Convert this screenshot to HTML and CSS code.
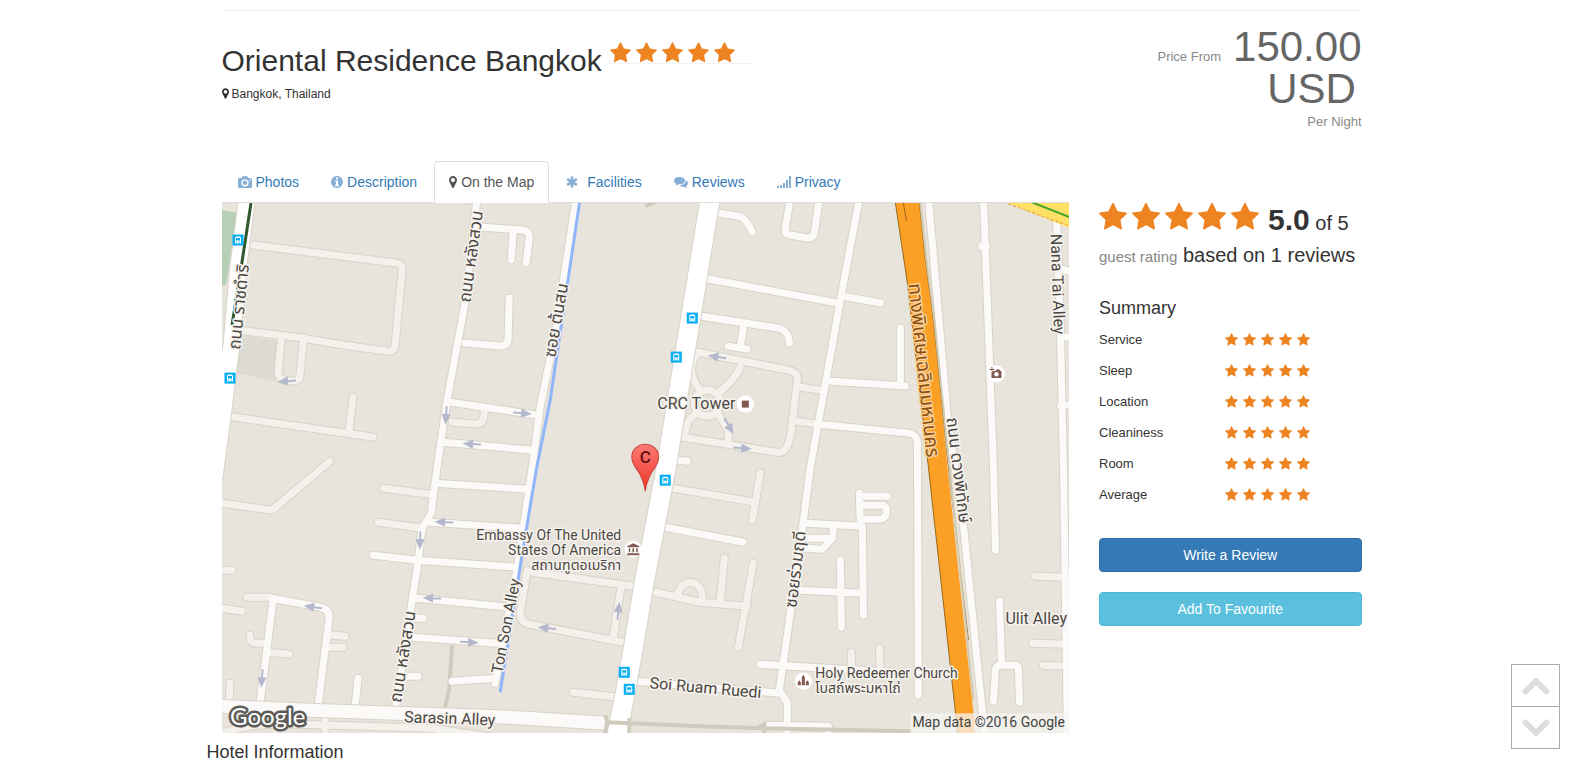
FILE: index.html
```html
<!DOCTYPE html>
<html lang="en">
<head>
<meta charset="utf-8">
<title>Oriental Residence Bangkok</title>
<link rel="stylesheet" href="styles.css">
</head>
<body>
<svg class="defs" aria-hidden="true">
  <symbol id="star" viewBox="0 60 1664 1570"><path d="M1664 647q0 22-26 48l-363 354 86 500q1 7 1 20 0 21-10.500 35.500t-30.500 14.500q-19 0-40-12l-449-236-449 236q-22 12-40 12-21 0-31.500-14.500t-10.500-35.500q0-6 2-20l86-500-364-354q-25-27-25-48 0-37 56-46l502-73 225-455q19-41 49-41t49 41l225 455 502 73q56 9 56 46z"/></symbol>
  <symbol id="pin" viewBox="0 384 1024 1536"><path d="M768 896q0-106-75-181t-181-75-181 75-75 181 75 181 181 75 181-75 75-181zm256 0q0 109-33 179l-364 774q-16 33-47.500 52t-67.500 19-67.500-19-46.500-52l-365-774q-33-70-33-179 0-212 150-362t362-150 362 150 150 362z"/></symbol>
</svg>

<main class="page">
  <header class="hotel-head">
    <div>
      <div class="title-row">
        <h1>Oriental Residence Bangkok</h1>
        <div class="stars stars-title" role="img" aria-label="5 stars">
          <svg><use href="#star"/></svg><svg><use href="#star"/></svg><svg><use href="#star"/></svg><svg><use href="#star"/></svg><svg><use href="#star"/></svg>
        </div>
      </div>
      <p class="place"><svg><use href="#pin"/></svg>Bangkok, Thailand</p>
    </div>
    <div class="price">
      <p class="amount"><small>Price From</small>150.00<br>USD<span class="trail">&nbsp;</span></p>
      <p class="per">Per Night</p>
    </div>
  </header>

  <div class="row">
    <section class="col-main">
      <nav>
        <ul class="tabs">
          <li><a href="#photos"><svg class="ic14" viewBox="0 0 14 14"><path fill-rule="evenodd" d="M1.500 3H3.600L4.900 1.200H9.100L10.400 3H12.500Q14 3 14 4.500V11.500Q14 13 12.500 13H1.500Q0 13 0 11.500V4.500Q0 3 1.500 3ZM7 4.200A3.600 3.600 0 1 0 7 11.400A3.600 3.600 0 1 0 7 4.200ZM7 5.600A2.200 2.200 0 1 1 7 10A2.200 2.200 0 1 1 7 5.600ZM11.500 4.300V5.600H12.900V4.300Z"/></svg>Photos</a></li>
          <li><a href="#description"><svg class="ic12" viewBox="0 0 12 12"><path fill-rule="evenodd" d="M6 0A6 6 0 1 0 6 12A6 6 0 1 0 6 0ZM5 1.500H7V3.300H5ZM4.200 4.500H7V8.700H8V10.200H4V8.700H5V6H4.200Z"/></svg>Description</a></li>
          <li><a class="active" href="#map"><svg class="ic8"><use href="#pin"/></svg>On the Map</a></li>
          <li><a href="#facilities"><svg class="ic-wide" viewBox="0 0 12 12"><path class="line" d="M6 .5V11.500M1.200 3.200L10.800 8.800M10.800 3.200L1.200 8.800"/></svg>Facilities</a></li>
          <li><a href="#reviews"><svg class="ic14" viewBox="0 0 14 14"><path d="M5.500 2C2.500 2 0 3.600 0 5.700C0 7 .9 8 2.100 8.700C2 9.500 1.600 10 1.200 10.500C2.500 10.400 3.500 9.900 4.200 9.300C8 9.700 11 8 11 5.700C11 3.600 8.500 2 5.500 2Z"/><path d="M11.900 5C12 8 9 10.200 5.600 10.200C6.600 11.300 8.500 11.900 10.200 11.700C11 12.400 12 12.800 13.200 12.800C12.700 12.300 12.400 11.800 12.300 11.100C14.600 9.800 14.500 6.500 11.900 5Z"/></svg>Reviews</a></li>
          <li><a href="#privacy"><svg class="ic14" viewBox="0 0 14 14"><path d="M0 11H2V13H0ZM3 10H5V13H3ZM6 8H8V13H6ZM9 5H11V13H9ZM12 1H14V13H12Z"/></svg>Privacy</a></li>
        </ul>
      </nav>
      <svg class="map" viewBox="222 203 847 530" role="img" aria-label="Map around the hotel">
        <defs>
          <g id="lanes">
            <path d="M253 245L396 263Q403 264 402 270L395 345Q394 352 387 351Q340 345 303 338L245 331"/>
            <path d="M281 341L278 372Q279 380 287 381H293Q300 381 300 374L303 343"/>
            <path d="M227 416L373 437M353 397L349 430M330 461L272 510 222 503"/>
            <path d="M452 422L476 424Q484 424 484 412M470 200L460 197M383 488L430 494M378 522L422 528"/>
            <path d="M222 570H232M222 608L242 611M247 597H270M250 635Q249 643 257 643H265M268 652L289 654M332 635L345 636M330 647H343M230 683L229 705"/>
            <path d="M697 352L788 370Q798 372 797 380L791 430Q788 455 776 452L682 437M700 390Q684 370 697 353M718 393Q735 380 740 367M697 413Q684 420 685 437M717 413L728 430V443"/>
            <circle cx="707" cy="403" r="13"/>
            <path d="M800 387L820 390M795 421L817 424"/>
            <path d="M672 488L755 502M760 473L752 520M655 592L700 602 747 606M677 597C679 576 704 578 702 600M724 558L720 600M753 563L738 647"/>
            <path d="M533 572L633 586M527 570L520 612Q520 622 529 624L623 642M621 585L613 637M573 692L617 697M851 652V670M879 648L880 672"/>
            <path d="M222 733Q250 722 300 724L430 728 500 738M325 706V730M1032 643L1066 644M1043 665L1066 666M1035 576L1067 577"/>
          </g>
          <g id="streets">
            <path d="M477 198L465 302 447 400 437 467 431 513 422 528 417 568 395 710"/>
            <path d="M480 227L522 230Q530 231 529 238L526 263M513 232L511 260M465 343L500 346Q508 346 508 338L509 298"/>
            <path d="M450 402L537 415M443 442L533 450M435 483L527 489M430 522L522 528M373 555L417 560 517 567M417 598L510 607M413 618H423M413 637L497 643M403 676H418M452 681L495 678"/>
            <path d="M576 198L555 333 540 407 532 467 517 568 495 683"/>
            <path d="M272 598L320 607Q330 609 329 618L318 706M273 600L260 703M358 678L355 706"/>
            <path d="M717 213L738 216Q745 217 752 232M703 278L837 303M847 297L880 303M700 316L778 328Q789 331 789 343M743 328L740 347M728 346L747 349"/>
            <path d="M790 198L785 228Q784 234 790 235L806 238Q812 239 814 233L819 198M677 460L687 461M665 527L743 542"/>
            <path d="M859 198L840 300 810 467 802 528 783 662 779 690 787 702V730"/>
            <path d="M828 381L905 386M900 328L900 384M817 424L908 433Q916 434 917 442L918 695"/>
            <path d="M807 523L862 526 863 615M859 493L860 525M860 496H887M862 505H882Q887 506 886 513Q885 519 879 519H862M833 528L832 538H807M832 538L822 549 805 548M840 560L841 627M800 590L862 593"/>
            <path d="M760 664L893 672M635 681L780 693M768 725L828 726V738"/>
            <path d="M983 198L993 467 995 550M981 246H986M928 198L947 417 962 515 982 712 985 740"/>
            <path d="M1056 216L1060 333 1063 467 1067 740M1058 268L1072 272M1060 337H1072M1060 405H1072"/>
            <path d="M999 601L1001 662M993 701L995 669Q996 665 1000 665H1014Q1019 665 1018 670L1019 702"/>
          </g>
          <g id="bus">
            <rect x="-5.500" y="-5.500" width="11" height="11" fill="#05aef5"/>
            <path d="M-3 3.500V-2Q-3 -3.500 -1.500 -3.500H1.500Q3 -3.500 3 -2V3.500Z" fill="#fff"/>
            <path d="M-2 -2H2V.5H-2ZM-2 1.500H-1V2.500H-2ZM1 1.500H2V2.500H1ZM-1.500 3H1.500V3.500H-1.500Z" fill="#05aef5"/>
          </g>
          <path id="way" d="M-8 0H2M1 -3L8 0 1 3Z"/>
          <linearGradient id="pinfill" x1="0" y1="0" x2="0" y2="1"><stop offset="0" stop-color="#fb7b74"/><stop offset="1" stop-color="#ee3328"/></linearGradient>
        </defs>

        <rect class="land" x="222" y="203" width="848" height="530"/>
        <path class="park" d="M222 210L237 213 226 285H222Z"/>
        <path class="block" d="M240 335L280 341 275 381 237 373Z"/>
        <path class="track" d="M452 645L449 690 445 707M645 206L658 201"/>

        <use class="case" href="#lanes"/><use class="case" href="#streets"/>
        <use class="lane" href="#lanes"/><use class="street" href="#streets"/>

        <path class="case avenue-l" d="M247 198L238 270 232 340 223 413 214 480"/>
        <path class="road avenue-l" d="M247 198L238 270 232 340 223 413 214 480"/>
        <path class="rail" d="M251 203L240 275 232 325"/>
        <path class="canal" d="M580 198L550 400 536 470 521 560 500 692"/>
        <path class="case sarasin" d="M218 706L310 710 510 717 605 723"/>
        <path class="street sarasin" d="M218 706L310 710 510 717 605 723"/>
        <path class="case avenue" d="M710 198L666 467 644 582 633 648 624 698 616 738"/>
        <path class="road avenue" d="M710 198L666 467 644 582 633 648 624 698 616 738"/>
        <path class="track" d="M605 715L607 722 605 733M607 722L700 726 763 728 912 731M629 718V735M756 728L764 724V733"/>

        <path class="highway" d="M895 203L907 283 928 467 955 712 957 733H974L973 712 947 467 933 320 925 260 919 203Z"/>
        <path class="edge" d="M895 203L907 283 928 467 955 712 957 733M903 203L906 221M919 203L925 260 933 320 948 467 968 640"/>
        <path class="ramp" d="M920 203L926 260 934 320 949 467 973 700"/>
        <path class="yellow" d="M1007 203L1069 228V203Z"/>
        <path class="dash" d="M1008 204L1069 226"/>
        <path class="green" d="M1028 201L1069 217"/>

        <g class="ways">
          <use href="#way" transform="translate(288 381) rotate(176)"/><use href="#way" transform="translate(446 414) rotate(94)"/>
          <use href="#way" transform="translate(473 444) rotate(183)"/><use href="#way" transform="translate(521 413) rotate(5)"/>
          <use href="#way" transform="translate(718 357) rotate(188)"/><use href="#way" transform="translate(728 425) rotate(60)"/>
          <use href="#way" transform="translate(741 448) rotate(4)"/><use href="#way" transform="translate(445 522) rotate(182)"/>
          <use href="#way" transform="translate(420 539) rotate(92)"/><use href="#way" transform="translate(433 598) rotate(182)"/>
          <use href="#way" transform="translate(468 642) rotate(3)"/><use href="#way" transform="translate(314 607) rotate(188)"/>
          <use href="#way" transform="translate(262 677) rotate(94)"/><use href="#way" transform="translate(548 628) rotate(186)"/>
          <use href="#way" transform="translate(618 612) rotate(-84)"/>
        </g>
        <use href="#bus" transform="translate(238 240)"/><use href="#bus" transform="translate(230 378)"/>
        <use href="#bus" transform="translate(692 318)"/><use href="#bus" transform="translate(676 357)"/>
        <use href="#bus" transform="translate(665 480)"/><use href="#bus" transform="translate(624 672)"/>
        <use href="#bus" transform="translate(629 689)"/>

        <g class="poi">
          <circle cx="745" cy="404" r="8.500"/><path d="M741.500 400.500H748.500V407.500H741.500Z"/>
          <circle cx="633" cy="549" r="8.500"/><path d="M633 543L639 546V547H627V546ZM628.500 548H630V552H628.500ZM632.200 548H633.800V552H632.200ZM636 548H637.500V552H636ZM627 553H639V555H627Z"/>
          <circle cx="996" cy="374" r="8.500"/><path fill-rule="evenodd" d="M991 371H995L996 369.500H999L1000 371H1001V378H991ZM996 372A2 2 0 1 0 996 376.500A2 2 0 1 0 996 372ZM989 369H991V367H992V369H994V370H992V372H991V370H989Z"/>
          <circle cx="803" cy="681" r="8.500"/><path d="M797.500 682L799 680 800.500 682V685H797.500ZM801.500 677L803 674.500 804.500 677V685H801.500ZM805.500 682L807 680 808.500 682V685H805.500Z"/>
        </g>

        <g class="labels">
          <text x="657" y="409" class="t16">CRC Tower</text>
          <text x="621" y="540" text-anchor="end">Embassy Of The United</text>
          <text x="621" y="555" text-anchor="end">States Of America</text>
          <text x="621" y="570" text-anchor="end">สถานฑูตอเมริกา</text>
          <text x="815" y="678">Holy Redeemer Church</text>
          <text x="815" y="693">โบสถ์พระมหาไถ่</text>
          <text x="1005" y="624" class="t16">Ulit Alley</text>
          <text x="404" y="722" class="t16" transform="rotate(2 404 722)">Sarasin Alley</text>
          <text x="649" y="688" class="t16" transform="rotate(5 649 688)">Soi Ruam Ruedi</text>
          <text x="502" y="674" class="t16" transform="rotate(-79 502 674)">Ton Son Alley</text>
          <text x="1050" y="234" class="t16" transform="rotate(88 1050 234)">Nana Tai Alley</text>
          <text x="240" y="350" class="t17" transform="rotate(-84 240 350)">ถนน ราชดำริ</text>
          <text x="470" y="303" class="t17" transform="rotate(-82 470 303)">ถนน หลังสวน</text>
          <text x="555" y="358" class="t17" transform="rotate(-80 555 358)">ซอย ต้นสน</text>
          <text x="401" y="703" class="t17" transform="rotate(-81 401 703)">ถนน หลังสวน</text>
          <text x="796" y="608" class="t17" transform="rotate(-83 796 608)">ซอยร่วมฤดี</text>
          <text x="946" y="418" class="t17" transform="rotate(83 946 418)">ถนน ดวงพิทักษ์</text>
          <text x="908" y="284" class="t19 on-orange" transform="rotate(84 908 284)">ทางพิเศษเฉลิมมหานคร</text>
        </g>

        <path d="M645 491Q643 477 635 467Q631.500 462 631.500 457A13.500 13 0 0 1 658.500 457Q658.500 462 655 467Q647 477 645 491Z" fill="url(#pinfill)" stroke="#c8473f"/>
        <text class="pin-letter" x="645" y="463" text-anchor="middle">C</text>
        <text class="brand" x="230" y="725">Google</text>
        <rect class="credit-bg" x="910" y="713" width="160" height="20"/>
        <text class="credit" x="912" y="727">Map data ©2016 Google</text>
      </svg>
    </section>

    <aside class="col-side">
      <div class="score">
        <div class="stars stars-big" role="img" aria-label="5 stars">
          <svg><use href="#star"/></svg><svg><use href="#star"/></svg><svg><use href="#star"/></svg><svg><use href="#star"/></svg><svg><use href="#star"/></svg>
        </div>
        <p><strong>5.0</strong> of 5</p>
      </div>
      <p class="based"><small>guest rating</small> based on 1 reviews</p>
      <h2>Summary</h2>
      <table class="summary">
        <tr><th scope="row">Service</th><td><div class="stars"><svg><use href="#star"/></svg><svg><use href="#star"/></svg><svg><use href="#star"/></svg><svg><use href="#star"/></svg><svg><use href="#star"/></svg></div></td></tr>
        <tr><th scope="row">Sleep</th><td><div class="stars"><svg><use href="#star"/></svg><svg><use href="#star"/></svg><svg><use href="#star"/></svg><svg><use href="#star"/></svg><svg><use href="#star"/></svg></div></td></tr>
        <tr><th scope="row">Location</th><td><div class="stars"><svg><use href="#star"/></svg><svg><use href="#star"/></svg><svg><use href="#star"/></svg><svg><use href="#star"/></svg><svg><use href="#star"/></svg></div></td></tr>
        <tr><th scope="row">Cleaniness</th><td><div class="stars"><svg><use href="#star"/></svg><svg><use href="#star"/></svg><svg><use href="#star"/></svg><svg><use href="#star"/></svg><svg><use href="#star"/></svg></div></td></tr>
        <tr><th scope="row">Room</th><td><div class="stars"><svg><use href="#star"/></svg><svg><use href="#star"/></svg><svg><use href="#star"/></svg><svg><use href="#star"/></svg><svg><use href="#star"/></svg></div></td></tr>
        <tr><th scope="row">Average</th><td><div class="stars"><svg><use href="#star"/></svg><svg><use href="#star"/></svg><svg><use href="#star"/></svg><svg><use href="#star"/></svg><svg><use href="#star"/></svg></div></td></tr>
      </table>
      <div class="actions">
        <button class="btn btn-primary" type="button">Write a Review</button>
        <button class="btn btn-info" type="button">Add To Favourite</button>
      </div>
    </aside>
  </div>
  <h2 class="info-title">Hotel Information</h2>
</main>

<div class="scroller">
  <button type="button" aria-label="Scroll up"><svg viewBox="0 0 28 18"><path d="M3.500 14.500L14 4 24.500 14.500"/></svg></button>
  <button type="button" aria-label="Scroll down"><svg viewBox="0 0 28 18"><path d="M3.500 3.500L14 14 24.500 3.500"/></svg></button>
</div>
</body>
</html>
```
FILE: styles.css
```css
* { box-sizing: border-box; }

body {
  margin: 0;
  padding: 10px 0 0 13px;
  background: #fff;
  color: #333;
  font: 14px/20px "Liberation Sans", Arial, sans-serif;
}

h1, h2, p, ul { margin: 0; padding: 0; font-weight: normal; }
small { line-height: 1; }
.defs { position: absolute; width: 0; height: 0; }
.page { max-width: 1140px; margin: 0 auto; }

.hotel-head {
  display: flex;
  justify-content: space-between;
  border-top: 1px solid #eee;
  margin-bottom: 29px;
}
.title-row { display: flex; align-items: flex-start; padding-top: 31px; }
h1 { font-size: 30px; line-height: 33px; padding-top: 2px; }

.stars { display: flex; gap: 5px; fill: #ee8322; }
.stars svg { width: 13px; height: 13px; }
.stars-title { margin-left: 8px; padding-right: 18px; border-bottom: 1px solid #f3f3f3; }
.stars-title svg { width: 21px; height: 21px; }
.stars-big svg { width: 28px; height: 27px; }

.place { margin-top: 9px; font-size: 12px; line-height: 17px; }
.place svg { width: 7px; height: 11px; margin-right: 3px; vertical-align: -1px; fill: #333; }

.price { padding-top: 15px; text-align: right; color: #888; }
.amount { font-size: 42px; line-height: 42px; color: #666; }
.amount small { margin-right: 12px; font-size: 13px; color: #888; }
.trail { font-size: 20px; line-height: 1; }
.per { margin-top: 2px; font-size: 13px; }

.row { display: flex; margin: 0 -15px; }
.col-main { flex: 0 0 75%; padding: 0 15px; }
.col-side { flex: 0 0 25%; padding: 42px 15px 0; }

.tabs { display: flex; list-style: none; padding-left: 1px; border-bottom: 1px solid #ddd; }
.tabs li { margin: 0 2px -1px 0; }
.tabs a {
  display: block;
  padding: 10px 14px;
  border: 1px solid transparent;
  border-radius: 4px 4px 0 0;
  color: #337ab7;
  text-decoration: none;
}
.tabs a.active { color: #555; background: #fff; border-color: #ddd #ddd #fff; }
.tabs svg { height: 14px; margin-right: 4px; vertical-align: -2px; fill: #85afd4; }
.tabs .active svg { fill: #555; height: 12px; vertical-align: -1px; }
.ic14 { width: 14px; }
.ic12 { width: 12px; }
.ic8 { width: 8px; }
.tabs .ic-wide { width: 12px; height: 12px; margin-right: 9px; vertical-align: -1px; }
.line { stroke: #85afd4; stroke-width: 2.6; }

.map { display: block; width: 100%; height: auto; }
.land { fill: #e8e4dc; }
.park { fill: #b7cfb6; }
.block { fill: #dddad2; }
.map path.track { stroke: #cfccbd; stroke-width: 4; fill: none; }
.case, .lane, .street, .road { fill: none; stroke-linecap: round; stroke-linejoin: round; }
.case { stroke: #d8d3c8; stroke-width: 9px; }
.lane { stroke: #f4f1ec; stroke-width: 7px; }
.street { stroke: #fbfaf8; stroke-width: 7px; }
.road { stroke: #fff; }
.case.avenue { stroke-width: 21px; }
.road.avenue { stroke-width: 19px; }
.case.avenue-l { stroke-width: 18px; }
.road.avenue-l { stroke-width: 16px; }
.case.sarasin { stroke-width: 15px; }
.street.sarasin { stroke-width: 13px; }
.rail { fill: none; stroke: #31572c; stroke-width: 3; }
.canal { fill: none; stroke: #8fb6fa; stroke-width: 3; }
.highway { fill: #fb9f25; }
.edge { fill: none; stroke: #9a6a1c; }
.ramp { fill: none; stroke: #d3c9ae; stroke-width: 2; }
.yellow { fill: #ffe168; }
.dash { fill: none; stroke: #e59b4c; stroke-dasharray: 3 2; }
.green { stroke: #45a72a; stroke-width: 2; }
.ways { stroke: #b4b8cc; stroke-width: 2; fill: #b4b8cc; }
.poi circle { fill: #fff; }
.poi path { fill: #84594f; }
.labels text {
  font: 14px/1 Roboto, "Noto Sans Thai", sans-serif;
  fill: #4b4743;
  stroke: #f6f3ee;
  stroke-width: 3px;
  stroke-linejoin: round;
  paint-order: stroke;
}
.labels .t16 { font-size: 16px; }
.labels .t17 { font-size: 17px; }
.labels .t19 { font-size: 19px; }
.labels .on-orange { fill: #8a4f0b; stroke: #fbd09a; }
.pin-letter { font: 500 17px Roboto, sans-serif; fill: #5e120e; }
.brand {
  font: 24px Lato, sans-serif;
  fill: #fff;
  stroke: #5c5b58;
  stroke-width: 5px;
  stroke-linejoin: round;
  paint-order: stroke;
}
.credit-bg { fill: #f6f4f0; opacity: .75; }
.credit { font: 14px Roboto, sans-serif; fill: #444; }

.score { display: flex; align-items: flex-start; font-size: 20px; line-height: 34px; }
.score p { margin-left: 9px; }
.score strong { font-size: 30px; }
.based { margin-top: 1px; font-size: 20px; line-height: 28px; }
.based small { font-size: 15px; color: #888; }
h2 { font-size: 18px; line-height: 20px; }
.col-side h2 { margin-top: 29px; }

.summary { width: 100%; margin-top: 6px; border-collapse: collapse; font-size: 13px; }
.summary th { width: 126px; height: 31px; padding: 0; text-align: left; font-weight: normal; }
.summary td { padding: 0; }

.actions { display: grid; gap: 20px; margin-top: 28px; }
.btn {
  padding: 6px 12px;
  border: 1px solid;
  border-radius: 4px;
  color: #fff;
  font: inherit;
}
.btn-primary { background: #337ab7; border-color: #2e6da4; }
.btn-info { background: #5bc0de; border-color: #46b8da; }

.info-title { margin: 9px 0 0 -15px; }

.scroller { position: fixed; right: 10px; bottom: 21px; display: grid; width: 49px; }
.scroller button { height: 43px; padding: 0; border: 1px solid #aaa; background: #fff; }
.scroller button + button { margin-top: -1px; }
.scroller svg { width: 28px; height: 18px; margin-top: 4px; fill: none; stroke: #ddd; stroke-width: 6; stroke-linecap: round; stroke-linejoin: round; }
```
